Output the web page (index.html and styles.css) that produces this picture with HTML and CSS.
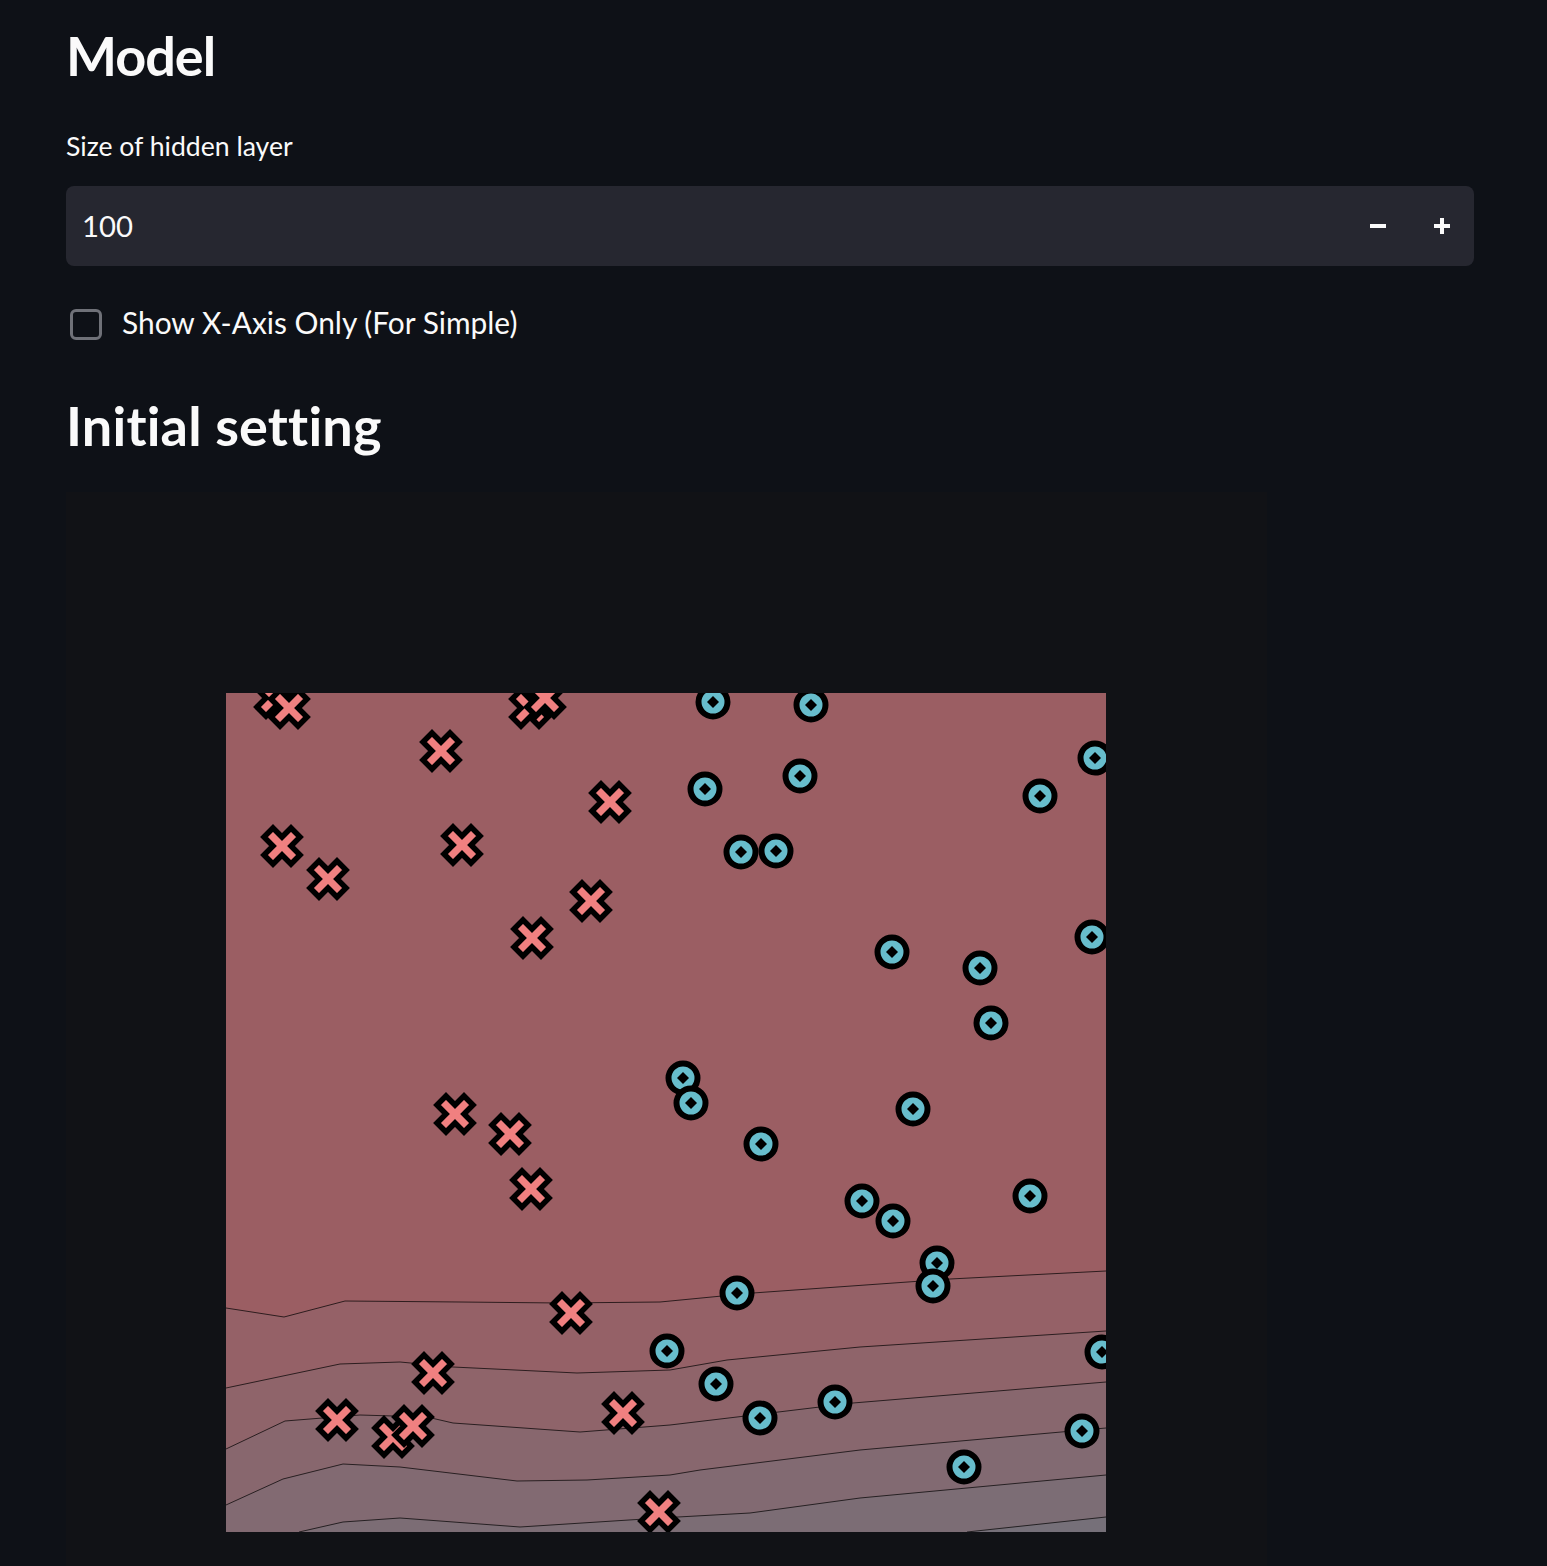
FILE: index.html
```html
<!DOCTYPE html>
<html lang="en">
<head>
<meta charset="utf-8">
<title>Model</title>
<link rel="stylesheet" href="styles.css">
</head>
<body>
<main class="main">
  <h2 class="heading heading-first">Model</h2>

  <div class="field">
    <label class="field-label" for="hidden-size">Size of hidden layer</label>
    <div class="number-input">
      <span class="number-value" id="hidden-size">100</span>
      <div class="steppers">
        <button class="step" type="button" aria-label="decrement">
          <svg width="16" height="16" viewBox="0 0 16 16"><rect x="0" y="6" width="16" height="4" fill="#fafafa"/></svg>
        </button>
        <button class="step" type="button" aria-label="increment">
          <svg width="16" height="16" viewBox="0 0 16 16"><rect x="0" y="6" width="16" height="4" fill="#fafafa"/><rect x="6" y="0" width="4" height="16" fill="#fafafa"/></svg>
        </button>
      </div>
    </div>
  </div>

  <label class="checkbox-row">
    <span class="checkbox-box"></span>
    <span class="checkbox-text">Show X-Axis Only (For Simple)</span>
  </label>

  <h2 class="heading heading-second">Initial setting</h2>

  <div class="figure">
    <svg class="plot" width="880" height="839" viewBox="0 0 880 839">
      <defs>
        <g id="xm">
          <path d="M-9,-18 L0,-9 L9,-18 L18,-9 L9,0 L18,9 L9,18 L0,9 L-9,18 L-18,9 L-9,0 L-18,-9 Z" fill="#f08080" stroke="#000" stroke-width="5.5" stroke-linejoin="miter"/>
        </g>
        <g id="om">
          <circle r="14.5" fill="#67bdcc" stroke="#000" stroke-width="6"/>
          <polygon points="0,-6 6,0 0,6 -6,0" fill="#000"/>
        </g>
      </defs>

      <rect x="0" y="0" width="880" height="839" fill="#9b5e63"/>
      <polygon fill="#956167" points="0,615 58,624 119,608 234,609 334,610 434,609 527,600 724,586 880,578 880,839 0,839"/>
      <polygon fill="#8f646a" points="0,695 114,671 174,669 227,674 351,680 444,677 501,667 634,654 880,638 880,839 0,839"/>
      <polygon fill="#88676e" points="0,756 59,728 134,722 201,724 227,730 354,739 444,732 511,724 627,710 880,689 880,839 0,839"/>
      <polygon fill="#826a72" points="0,812 57,786 117,771 174,774 291,788 361,787 444,782 474,777 634,757 880,735 880,839 0,839"/>
      <polygon fill="#7c6d75" points="73,839 117,829 174,825 294,834 434,825 524,820 634,805 880,782 880,839"/>
      <polygon fill="#767079" points="741,839 880,824 880,839"/>

      <g fill="none" stroke="#000" stroke-opacity="0.7" stroke-width="1">
        <polyline points="0,615 58,624 119,608 234,609 334,610 434,609 527,600 724,586 880,578"/>
        <polyline points="0,695 114,671 174,669 227,674 351,680 444,677 501,667 634,654 880,638"/>
        <polyline points="0,756 59,728 134,722 201,724 227,730 354,739 444,732 511,724 627,710 880,689"/>
        <polyline points="0,812 57,786 117,771 174,774 291,788 361,787 444,782 474,777 634,757 880,735"/>
        <polyline points="73,839 117,829 174,825 294,834 434,825 524,820 634,805 880,782"/>
        <polyline points="741,839 880,824"/>
      </g>

      <use href="#xm" x="49" y="5"/>
      <use href="#xm" x="63" y="15"/>
      <use href="#xm" x="304" y="15"/>
      <use href="#xm" x="319" y="5"/>
      <use href="#xm" x="215" y="58"/>
      <use href="#xm" x="384" y="109"/>
      <use href="#xm" x="56" y="153"/>
      <use href="#xm" x="236" y="152"/>
      <use href="#xm" x="102" y="186"/>
      <use href="#xm" x="365" y="208"/>
      <use href="#xm" x="306" y="245"/>
      <use href="#xm" x="229" y="421"/>
      <use href="#xm" x="284" y="441"/>
      <use href="#xm" x="305" y="496"/>
      <use href="#xm" x="345" y="620"/>
      <use href="#xm" x="207" y="680"/>
      <use href="#xm" x="111" y="727"/>
      <use href="#xm" x="167" y="744"/>
      <use href="#xm" x="187" y="733"/>
      <use href="#xm" x="397" y="720"/>
      <use href="#xm" x="433" y="819"/>

      <use href="#om" x="487" y="9"/>
      <use href="#om" x="585" y="12"/>
      <use href="#om" x="869" y="65"/>
      <use href="#om" x="479" y="96"/>
      <use href="#om" x="574" y="83"/>
      <use href="#om" x="814" y="103"/>
      <use href="#om" x="515" y="159"/>
      <use href="#om" x="550" y="158"/>
      <use href="#om" x="666" y="259"/>
      <use href="#om" x="754" y="275"/>
      <use href="#om" x="866" y="244"/>
      <use href="#om" x="765" y="330"/>
      <use href="#om" x="457" y="385"/>
      <use href="#om" x="465" y="410"/>
      <use href="#om" x="535" y="451"/>
      <use href="#om" x="687" y="416"/>
      <use href="#om" x="636" y="508"/>
      <use href="#om" x="667" y="528"/>
      <use href="#om" x="804" y="503"/>
      <use href="#om" x="711" y="570"/>
      <use href="#om" x="707" y="593"/>
      <use href="#om" x="511" y="600"/>
      <use href="#om" x="441" y="658"/>
      <use href="#om" x="490" y="691"/>
      <use href="#om" x="534" y="725"/>
      <use href="#om" x="609" y="709"/>
      <use href="#om" x="876" y="659"/>
      <use href="#om" x="856" y="738"/>
      <use href="#om" x="738" y="774"/>
    </svg>
  </div>
</main>
</body>
</html>
```

FILE: styles.css
```css
* {
  box-sizing: border-box;
}

html, body {
  margin: 0;
  padding: 0;
  background: #0e1117;
  color: #fafafa;
  font-family: Lato, "Noto Sans", sans-serif;
  height: 1566px;
  overflow: hidden;
}

.main {
  width: 1408px;
  margin-left: 66px;
}

.heading {
  margin: 0;
  font-size: 54px;
  line-height: 64px;
  font-weight: 700;
  color: #fafafa;
}

.heading-first {
  padding-top: 24px;
  letter-spacing: -1px;
}

.heading-second {
  margin-top: 54px;
  letter-spacing: 0.2px;
}

.field {
  margin-top: 42px;
}

.field-label {
  display: block;
  font-size: 26.6px;
  line-height: 32px;
  color: #fafafa;
}

.number-input {
  margin-top: 24px;
  height: 80px;
  background: #262730;
  border-radius: 8px;
  display: flex;
  align-items: center;
  padding-left: 16px;
}

.number-value {
  flex: 1;
  font-size: 29.3px;
  line-height: 36px;
}

.steppers {
  display: flex;
  height: 100%;
}

.step {
  width: 64px;
  height: 100%;
  border: 0;
  background: transparent;
  padding: 0;
  display: flex;
  align-items: center;
  justify-content: center;
  cursor: pointer;
}

.step svg {
  display: block;
}

.checkbox-row {
  margin-top: 42px;
  height: 32px;
  display: flex;
  align-items: center;
  padding-left: 4px;
}

.checkbox-box {
  width: 32px;
  height: 31px;
  border: 3px solid #6f7178;
  border-radius: 6px;
  background: #0e1117;
  flex: none;
}

.checkbox-text {
  margin-left: 20px;
  font-size: 29.9px;
  line-height: 32px;
  margin-top: -5px;
}

.figure {
  margin-top: 34px;
  width: 1201px;
  height: 1200px;
  background: #111216;
  padding-top: 201px;
  padding-left: 160px;
}

.plot {
  display: block;
}
```
